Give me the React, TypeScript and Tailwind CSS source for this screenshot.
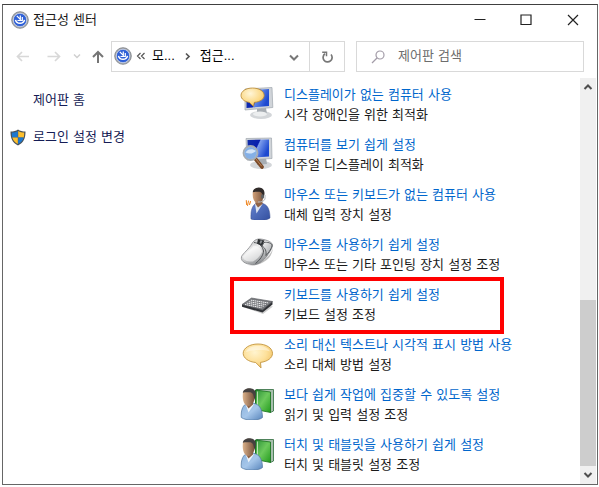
import React from "react";

const DisplaySpeechIcon = () => (
  <svg viewBox="0 0 34 34" className="w-[34px] h-[34px]" aria-hidden="true">
    <defs>
      <linearGradient id="screenA" x1="0" y1="0" x2="1" y2="0.4">
        <stop offset="0" stopColor="#1230a8" />
        <stop offset="0.55" stopColor="#0c25b4" />
        <stop offset="0.6" stopColor="#5f86e6" />
        <stop offset="1" stopColor="#1d49d0" />
      </linearGradient>
      <radialGradient id="bubbleA" cx="0.4" cy="0.3" r="0.8">
        <stop offset="0" stopColor="#fff6d8" />
        <stop offset="0.6" stopColor="#fbd987" />
        <stop offset="1" stopColor="#e9b552" />
      </radialGradient>
    </defs>
    <ellipse cx="21" cy="29" rx="11" ry="4" fill="#d3d6d9" />
    <path d="M17 23l9-1 1 6-10 1z" fill="#a7adb3" />
    <ellipse cx="20" cy="28" rx="7" ry="2.4" fill="#eceeef" />
    <path d="M5 3l27-1.500.8 20L5 24z" fill="#d0d4d9" stroke="#9fa6ad" strokeWidth=".7" />
    <path d="M6.500 4.500l22.500-1.500v17L6.500 22z" fill="url(#screenA)" />
    <path
      d="M12.500 2C6 2 1 5.200 1 9.400c0 3.600 3.500 6.200 8.300 7l4.200 4 .8-4c5.700-.5 9.900-3.200 9.900-7C24.200 5.200 19 2 12.500 2z"
      fill="url(#bubbleA)"
      stroke="#b58530"
      strokeWidth=".8"
    />
  </svg>
);

const DisplayMagnifierIcon = () => (
  <svg viewBox="0 0 34 34" className="w-[34px] h-[34px]" aria-hidden="true">
    <defs>
      <linearGradient id="screenB" x1="0" y1="0" x2="1" y2="0.4">
        <stop offset="0" stopColor="#1230a8" />
        <stop offset="0.5" stopColor="#0a1fae" />
        <stop offset="0.55" stopColor="#7d9dec" />
        <stop offset="1" stopColor="#1d49d0" />
      </linearGradient>
    </defs>
    <ellipse cx="21" cy="29" rx="11" ry="4" fill="#d3d6d9" />
    <path d="M17 23l9-1 1 6-10 1z" fill="#a7adb3" />
    <path d="M6 2.500L31.500 2l.5 20.500L7 24z" fill="#d0d4d9" stroke="#9fa6ad" strokeWidth=".7" />
    <path d="M7.500 4L29 3.500v17L8 22z" fill="url(#screenB)" />
    <path d="M15.500 23l6.500 8" stroke="#7b4a28" strokeWidth="3.600" strokeLinecap="round" />
    <path d="M16 23l5.500 7" stroke="#b98458" strokeWidth="1" strokeLinecap="round" />
    <circle cx="10.500" cy="17" r="7" fill="#b9d6f3" stroke="#a7adb3" strokeWidth="1.800" />
    <circle cx="10.500" cy="17" r="6" fill="#6f9fe0" opacity=".7" />
    <path d="M5.500 16.500c2-3.500 7-4.500 10.300-1.500-2 2.500-6.500 3.500-10.300 1.500z" fill="#e8f3fd" opacity=".8" />
  </svg>
);

const HeadsetPersonIcon = () => (
  <svg viewBox="0 0 34 34" className="w-[34px] h-[34px]" aria-hidden="true">
    <defs>
      <linearGradient id="faceC" x1="0" y1="0" x2="1" y2="0">
        <stop offset="0" stopColor="#d2a27a" />
        <stop offset="1" stopColor="#76503a" />
      </linearGradient>
      <linearGradient id="coatC" x1="0" y1="0" x2="1" y2="1">
        <stop offset="0" stopColor="#6583cf" />
        <stop offset="1" stopColor="#334f9f" />
      </linearGradient>
    </defs>
    <path
      d="M11 33c-.4-6.500.6-12 3.500-14.500 2-1.600 7-2 9.500-.5 3.800 1.500 6 6 6 14-4 3-14.500 3.200-19 1z"
      fill="url(#coatC)"
      stroke="#34498a"
      strokeWidth=".5"
    />
    <path d="M15 18l1.500 9.500L22.500 18z" fill="#dfe6f1" />
    <path d="M15.500 13h7v5l-4.500 3.500-2.500-3.500z" fill="#8f6346" />
    <path d="M12.800 6.500C13.300 3.500 15.500 2 18.500 2c3.400 0 5.700 2.500 5.400 6.200-.3 4.300-2.400 9-5.700 9-3.700 0-6.100-4.500-5.400-10.700z" fill="url(#faceC)" />
    <path d="M12.700 6.200C13.200 3 16 1.300 19 1.400c4 .2 6 3.200 5.400 7.100l-1.200 4-1-4.500c-.6-1.700-2-2.300-4-2.300-2-.1-4-.1-5.500.5z" fill="#302b2a" />
    <ellipse cx="22.500" cy="10.500" rx="1.400" ry="2.300" fill="#5e6266" />
    <path d="M25 9v4c-1 2.500-3.500 3-7 3" fill="none" stroke="#b4b8bd" strokeWidth="1" />
    <path d="M10.500 15.500l-1 3M8.500 15l-1 4.500M6.300 14.500l.3 4" stroke="#ef8b2c" strokeWidth="1.100" strokeLinecap="round" />
  </svg>
);

const MouseIcon = () => (
  <svg viewBox="0 0 34 34" className="w-[34px] h-[34px]" aria-hidden="true">
    <defs>
      <linearGradient id="shellD" x1="0" y1="0" x2=".6" y2="1">
        <stop offset="0" stopColor="#a5a7a9" />
        <stop offset="0.45" stopColor="#efefef" />
        <stop offset="1" stopColor="#85888b" />
      </linearGradient>
      <linearGradient id="buttonD" x1="0" y1="0" x2="1" y2="1">
        <stop offset="0" stopColor="#f7f7f7" />
        <stop offset="1" stopColor="#9da0a3" />
      </linearGradient>
    </defs>
    <path d="M8 29c9 1 22-7 25-17 0-2 .2 8-7 12.500-5 3.800-11 6-18 4.500z" fill="#bfbfbf" />
    <path
      d="M1.500 20.500C3 17.500 9 13 12 7.500 14 4 17 2.800 20 3c5 .3 11.500 2.500 12.500 5.500.5 3-3 8-5.500 11.500-3 4-7.500 8-12.500 8.500-6 .5-14.500-2-13-8z"
      fill="url(#shellD)"
      stroke="#77797c"
      strokeWidth=".7"
    />
    <path d="M3 20.500C6 17 11 14 13.500 9.500c3.500.5 7.500 2.500 8.500 6-1.500 4-5 8-9 10C8 26 3 24.500 3 20.500z" fill="#fff" opacity=".55" />
    <path d="M24 6.500c3.500-.8 7.500.7 8 2.500.2 2.500-3 7.500-6 10.500.5-4-.5-7.500-4-9.500z" fill="url(#buttonD)" stroke="#3f4245" strokeWidth=".8" />
    <path d="M14 6.500c3.500.3 8.500 2.500 9.500 8.500 0 4-3.500 9-8 12.500" fill="none" stroke="#515457" strokeWidth="1" />
    <path d="M18 3l6.500 1.500-2.500 5.500-5-2.500z" fill="#2f3235" />
    <path d="M20.500 4.200l2 .6-1.500 3-1.500-.8z" fill="#8c9093" />
  </svg>
);

const KeyboardIcon = () => (
  <svg viewBox="0 0 34 34" className="w-[34px] h-[34px]" aria-hidden="true">
    <path d="M3 21l20 7 10-7.500-6-1z" fill="#cfcfcf" />
    <path d="M2 18.500v2.200L22.500 26.500l10-8v-3z" fill="#303236" />
    <path d="M2 18.500L11.500 12l21 3.500-10 8.500z" fill="#77797d" stroke="#55585c" strokeWidth=".6" />
    <path
      d="M5 18.500l16.500 3.200M6.800 17.100l17 3.100M8.800 15.700l17 2.900M10.800 14.200l17.500 2.700"
      stroke="#eeeeef"
      strokeWidth="1"
      strokeDasharray="1.5 .5"
    />
  </svg>
);

const SpeechIcon = () => (
  <svg viewBox="0 0 34 34" className="w-[34px] h-[34px]" aria-hidden="true">
    <defs>
      <radialGradient id="bubbleF" cx="0.4" cy="0.35" r="0.8">
        <stop offset="0" stopColor="#fff4cf" />
        <stop offset="0.5" stopColor="#fde09a" />
        <stop offset="1" stopColor="#edb853" />
      </radialGradient>
    </defs>
    <path
      d="M18 8C9.800 8 3.200 12 3.200 17.300c0 4.800 5.500 8.600 12.500 9.200l5.300 5.400-.5-5.500c7-.8 12-4.500 12-9.100C32.500 12 26.200 8 18 8z"
      fill="url(#bubbleF)"
      stroke="#c3953f"
      strokeWidth=".9"
    />
    <path d="M6 16c1-3.500 6-6 12-6s10.500 2 12 5.500C24 13.500 12 13.500 6 16z" fill="#fff" opacity=".4" />
  </svg>
);

const PersonBookIcon = () => (
  <svg viewBox="0 0 34 34" className="w-[34px] h-[34px]" aria-hidden="true">
    <defs>
      <linearGradient id="bookG" x1="0" y1="0" x2="1" y2="1">
        <stop offset="0" stopColor="#2b9138" />
        <stop offset="0.5" stopColor="#6cc95c" />
        <stop offset="1" stopColor="#239b1d" />
      </linearGradient>
      <linearGradient id="faceG" x1="0" y1="0" x2="1" y2="0">
        <stop offset="0" stopColor="#dcb28b" />
        <stop offset="1" stopColor="#6e4a35" />
      </linearGradient>
      <linearGradient id="shirtG" x1="0" y1="0" x2="1" y2="1">
        <stop offset="0" stopColor="#8db4dd" />
        <stop offset="0.5" stopColor="#a5c6ea" />
        <stop offset="1" stopColor="#5784bb" />
      </linearGradient>
    </defs>
    <path d="M15 4l3-.7V25l-3-2z" fill="#175f20" />
    <path d="M16.500 3.500h17V25l-3 1.500z" fill="#a8bfae" stroke="#2c6a3a" strokeWidth=".8" />
    <path d="M15.500 4l15 2v20.500l-15-3z" fill="url(#bookG)" stroke="#15701b" strokeWidth=".8" />
    <path d="M17.500 5.500v17" stroke="#d9f0d0" strokeWidth=".8" />
    <path
      d="M1.300 31.500C.8 25 2.500 20 5.800 18c3-1.500 7-1.500 9.700-.2 4.500 1.500 7 6.700 7 13.700-4 3.500-16.500 3.500-21.200 0z"
      fill="url(#shirtG)"
      stroke="#4f759f"
      strokeWidth=".7"
    />
    <path d="M5.500 18l3 8.500 5.500-8.200z" fill="#edf3f9" />
    <path d="M6 14h7v4.500l-4.500 4L6 18.500z" fill="#8f6346" />
    <path d="M2.800 8C3 4.500 5.500 2.800 9 2.800c4.300 0 6.500 2.700 6.200 6.700C15 14.500 12.300 20 8.700 20 4.500 20 2.200 14.500 2.800 8z" fill="url(#faceG)" />
    <path d="M2.800 6.700C3.300 3.500 6.500 2 10 2.200c4.200.2 6.500 3.200 5.700 7.300l-1.200 4-1.300-5c-.7-1.700-2.200-2.300-4.200-2.300-2.300-.1-4.500-.1-6.200.5z" fill="#454140" />
  </svg>
);

const AccessIcon = () => (
  <svg viewBox="0 0 18 18" className="w-[18px] h-[18px] shrink-0" aria-hidden="true">
    <circle cx="9" cy="9" r="8.300" fill="#a9adb3" stroke="#777b81" strokeWidth=".8" />
    <circle cx="9" cy="9" r="6.700" fill="#2f60d6" stroke="#dfe5f2" strokeWidth=".7" />
    <path d="M4.500 8.800a4.600 4.300 0 0 0 9 0" fill="none" stroke="#fff" strokeWidth="1.500" />
    <path d="M5.800 4.800l4 4M9.300 4.500v5M6.500 9.500h4.800V6" fill="none" stroke="#fff" strokeWidth="1.200" />
  </svg>
);

const ShieldIcon = () => (
  <svg viewBox="0 0 16 17" className="w-4 h-[17px] shrink-0" aria-hidden="true">
    <path d="M8 .5c2 1.500 4.500 2 7.500 2 0 6.500-1.500 11-7.500 14C2 13.500.5 9 .5 2.500 3.500 2.500 6 2 8 .5z" fill="#4b5258" />
    <path d="M7.800 2C6 3 4 3.500 1.800 3.600c0 1.900.1 3.400.4 4.900h5.600z" fill="#1d78d0" />
    <path d="M8.200 2c1.800 1 3.800 1.500 6 1.600 0 1.900-.1 3.400-.4 4.900H8.200z" fill="#fdbf2d" />
    <path d="M2.300 8.500c.8 3 2.500 5 5.500 6.600V8.500z" fill="#fdbf2d" />
    <path d="M13.700 8.500c-.8 3-2.500 5-5.500 6.600V8.500z" fill="#1d78d0" />
  </svg>
);

const items = [
  { title: "디스플레이가 없는 컴퓨터 사용", text: "시각 장애인을 위한 최적화", Icon: DisplaySpeechIcon },
  { title: "컴퓨터를 보기 쉽게 설정", text: "비주얼 디스플레이 최적화", Icon: DisplayMagnifierIcon },
  { title: "마우스 또는 키보드가 없는 컴퓨터 사용", text: "대체 입력 장치 설정", Icon: HeadsetPersonIcon },
  { title: "마우스를 사용하기 쉽게 설정", text: "마우스 또는 기타 포인팅 장치 설정 조정", Icon: MouseIcon },
  { title: "키보드를 사용하기 쉽게 설정", text: "키보드 설정 조정", Icon: KeyboardIcon, marked: true },
  { title: "소리 대신 텍스트나 시각적 표시 방법 사용", text: "소리 대체 방법 설정", Icon: SpeechIcon },
  { title: "보다 쉽게 작업에 집중할 수 있도록 설정", text: "읽기 및 입력 설정 조정", Icon: PersonBookIcon },
  { title: "터치 및 태블릿을 사용하기 쉽게 설정", text: "터치 및 태블릿 설정 조정", Icon: PersonBookIcon },
];

const TitleBar = () => (
  <header className="flex items-center h-[30px] pl-2">
    <AccessIcon />
    <h1 className="ml-1 grow">접근성 센터</h1>
    <button type="button" aria-label="최소화" className="w-[46px] h-full flex items-center justify-center">
      <svg viewBox="0 0 12 12" className="w-3 h-3">
        <path d="M.5 5.500h11" stroke="#222" />
      </svg>
    </button>
    <button type="button" aria-label="최대화" className="w-[46px] h-full flex items-center justify-center">
      <svg viewBox="0 0 12 12" className="w-3 h-3">
        <path d="M1 1h10v9.500H1z" fill="none" stroke="#222" strokeWidth="1.200" />
      </svg>
    </button>
    <button type="button" aria-label="닫기" className="w-12 h-full flex items-center justify-center">
      <svg viewBox="0 0 12 12" className="w-3 h-3">
        <path d="M1 1l10 10M11 1L1 11" stroke="#222" strokeWidth="1.200" />
      </svg>
    </button>
  </header>
);

const Toolbar = () => (
  <div className="flex items-center mt-[6px] pr-[13px]">
    <nav className="flex items-center w-[108px] pl-3 shrink-0">
      <button type="button" aria-label="뒤로" className="w-4 h-4">
        <svg viewBox="0 0 16 16" className="w-4 h-4">
          <path d="M14 7.500H2.500M7 3L2.500 7.500 7 12" fill="none" stroke="#d8d8d8" strokeWidth="1.700" />
        </svg>
      </button>
      <button type="button" aria-label="앞으로" className="w-4 h-4 ml-[15px]">
        <svg viewBox="0 0 16 16" className="w-4 h-4">
          <path d="M1.500 7.500h12M9 3l4.500 4.500L9 12" fill="none" stroke="#d8d8d8" strokeWidth="1.700" />
        </svg>
      </button>
      <button type="button" aria-label="최근 위치" className="w-2 h-4 ml-[11px]">
        <svg viewBox="0 0 8 16" className="w-2 h-4">
          <path d="M1 5.500l3 3 3-3" fill="none" stroke="#cfcfcf" strokeWidth="1.500" />
        </svg>
      </button>
      <button type="button" aria-label="위로" className="w-4 h-4 ml-[9px]">
        <svg viewBox="0 0 16 16" className="w-4 h-4">
          <path d="M8 14V3M3 8l5-5 5 5" fill="none" stroke="#757575" strokeWidth="2" />
        </svg>
      </button>
    </nav>
    <div className="flex items-center w-[234px] h-[31px] border border-[#d9d9d9] shrink-0">
      <div className="flex items-center grow pl-[2px] pb-[2px]">
        <AccessIcon />
        <svg viewBox="0 0 10 10" className="w-[10px] h-[10px] ml-1" aria-hidden="true">
          <path d="M4.500 2l-3 3 3 3M8.500 2l-3 3 3 3" fill="none" stroke="#555" strokeWidth="1.200" />
        </svg>
        <span className="ml-[6px] text-black font-['Liberation_Sans','Noto_Sans_CJK_KR',sans-serif]">모...</span>
        <svg viewBox="0 0 8 10" className="w-2 h-[10px] ml-[9px]" aria-hidden="true">
          <path d="M2 2.500l3 3-3 3" fill="none" stroke="#555" strokeWidth="1.700" />
        </svg>
        <span className="ml-2 text-black font-['Liberation_Sans','Noto_Sans_CJK_KR',sans-serif]">접근...</span>
      </div>
      <button type="button" aria-label="이전 위치" className="w-[30px] h-full flex items-center justify-center">
        <svg viewBox="0 0 12 12" className="w-3 h-3">
          <path d="M2 4.500l4 4 4-4" fill="none" stroke="#777" strokeWidth="2" />
        </svg>
      </button>
      <button type="button" aria-label="새로 고침" className="w-[35px] h-full flex items-center justify-center border-l border-[#d9d9d9]">
        <svg viewBox="0 0 12 12" className="w-3 h-3">
          <path d="M10 3.500a4.500 4.500 0 1 1-6-.7" fill="none" stroke="#777" strokeWidth="1.700" />
          <path d="M1.200 1.300h4.300v4" fill="none" stroke="#777" strokeWidth="1.500" />
        </svg>
      </button>
    </div>
    <label className="flex items-center grow min-w-0 h-[31px] ml-[11px] pl-[14px] border border-[#d9d9d9]">
      <svg viewBox="0 0 14 14" className="w-[14px] h-[14px] shrink-0" aria-hidden="true">
        <circle cx="9" cy="5" r="4" fill="none" stroke="#a39ca8" strokeWidth="1.200" />
        <path d="M6 8l-5 5" stroke="#a39ca8" strokeWidth="1.300" />
      </svg>
      <input
        type="text"
        aria-label="제어판 검색"
        placeholder="제어판 검색"
        className="grow min-w-0 ml-[13px] mb-[2px] outline-none placeholder:text-[#6d6d6d]"
      />
    </label>
  </div>
);

const Scrollbar = () => (
  <div className="flex flex-col w-4 shrink-0 bg-[#f0f0f0]">
    <button type="button" aria-label="위로 스크롤" className="h-[18px] flex items-center justify-center">
      <svg viewBox="0 0 10 10" className="w-[10px] h-[10px]">
        <path d="M1.500 7L5 3.500 8.500 7" fill="none" stroke="#505050" strokeWidth="2" />
      </svg>
    </button>
    <div className="grow flex flex-col">
      <div className="grow-[204]" />
      <div className="grow-[166] bg-[#cdcdcd]" />
    </div>
    <button type="button" aria-label="아래로 스크롤" className="h-[18px] flex items-center justify-center">
      <svg viewBox="0 0 10 10" className="w-[10px] h-[10px]">
        <path d="M1.500 3L5 6.500 8.500 3" fill="none" stroke="#505050" strokeWidth="2" />
      </svg>
    </button>
  </div>
);

export default function App() {
  return (
    <div className="min-h-screen flex flex-col bg-white pt-1 pl-[2px] pr-px pb-[2px] font-['DejaVu_Sans','Noto_Sans_CJK_KR',sans-serif] text-[13px] leading-5 text-[#1a1a1a]">
      <main className="grow flex flex-col border border-[#666] border-t-[#404040]">
        <TitleBar />
        <Toolbar />
        <div className="grow flex mt-[6px] pr-px">
          <aside className="w-[237px] shrink-0 pl-[7px] pt-3 flex flex-col gap-[17px]">
            <a href="#home" className="pl-[23px] text-[#151c55]">
              제어판 홈
            </a>
            <a href="#login" className="flex items-center gap-[7px] text-[#151c55]">
              <ShieldIcon />
              로그인 설정 변경
            </a>
          </aside>
          <ul className="grow flex flex-col gap-[10px] pt-[7px] pb-[9px]">
            {items.map(({ title, text, Icon, marked }) => (
              <li key={title} className="relative flex gap-[10px]">
                <div className="pt-px">
                  <Icon />
                </div>
                <div>
                  <a href="#setting" className="block text-[#0066cc]">
                    {title}
                  </a>
                  <p>{text}</p>
                </div>
                {marked && (
                  <div className="absolute -left-[10px] -top-2 w-[274px] h-[57px] border-4 border-[#ff0000] pointer-events-none" />
                )}
              </li>
            ))}
          </ul>
          <Scrollbar />
        </div>
      </main>
    </div>
  );
}
